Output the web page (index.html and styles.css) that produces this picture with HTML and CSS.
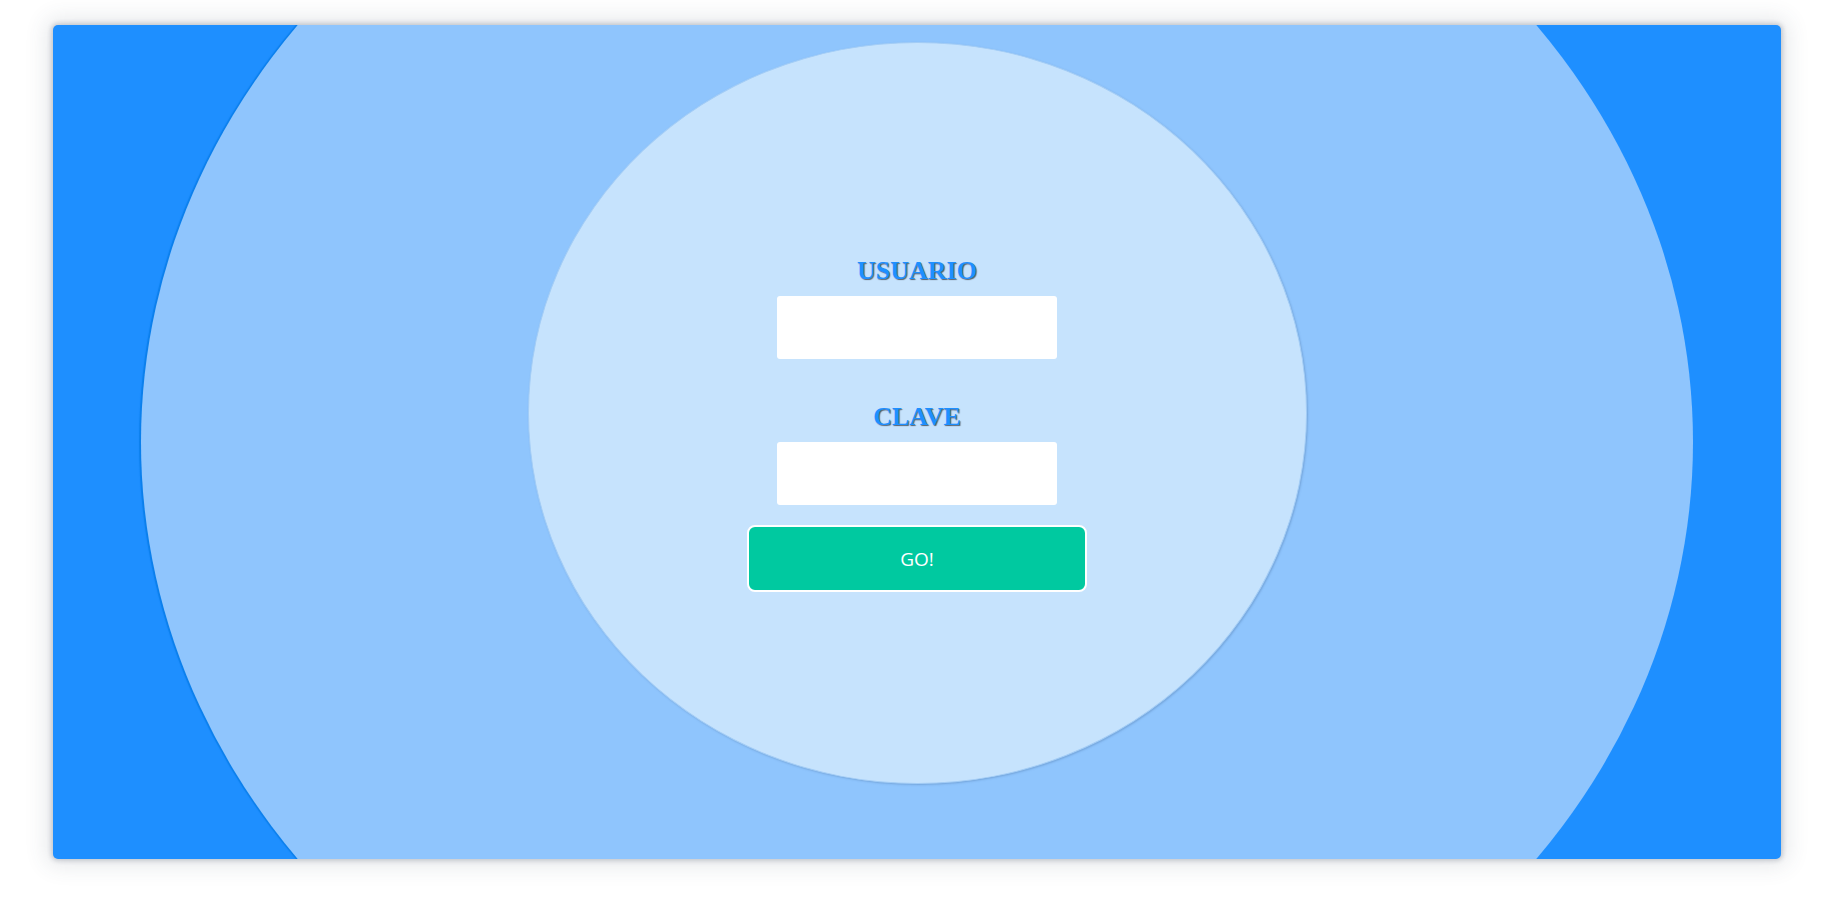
FILE: index.html
```html
<!DOCTYPE html>
<html lang="es">
<head>
<meta charset="utf-8">
<title>Login</title>
<link rel="stylesheet" href="styles.css">
</head>
<body>
<div class="card">
  <div class="outer-ring">
    <div class="inner-ring">
      <form class="login-form">
        <label class="field-label" for="usuario">USUARIO</label>
        <input class="field-input" id="usuario" type="text">
        <label class="field-label second" for="clave">CLAVE</label>
        <input class="field-input" id="clave" type="password">
        <button class="go-btn" type="button">GO!</button>
      </form>
    </div>
  </div>
</div>
</body>
</html>
```

FILE: styles.css
```css
html, body {
  margin: 0;
  padding: 0;
  background: #ffffff;
}
body {
  width: 1833px;
  height: 913px;
  overflow: hidden;
}
.card {
  box-sizing: border-box;
  width: 1728px;
  height: 834px;
  margin: 25px 0 0 53px;
  background: #1e8fff;
  border-radius: 5px;
  overflow: hidden;
  display: flex;
  align-items: center;
  justify-content: center;
  box-shadow: 0 0 4px 2px rgba(60, 70, 90, 0.22), 0 0 22px 7px rgba(60, 70, 90, 0.12);
}
.outer-ring {
  flex-shrink: 0;
  width: 1552px;
  height: 1384px;
  border-radius: 50%;
  background: #8fc5fd;
  box-shadow: -2px 0 1px #0b7fec;
  display: flex;
  align-items: center;
  justify-content: center;
}
.inner-ring {
  flex-shrink: 0;
  box-sizing: border-box;
  width: 779px;
  height: 742px;
  margin-bottom: 58px;
  border-radius: 50%;
  background: #c6e3fd;
  border: 1px solid #a3cdf6;
  box-shadow: 1px 1px 2px rgba(70, 110, 160, 0.35);
  display: flex;
  justify-content: center;
  padding-top: 213px;
}
.login-form {
  display: flex;
  flex-direction: column;
  align-items: center;
  margin: 0;
}
.field-label {
  font-family: "Liberation Serif", "Times New Roman", serif;
  font-weight: bold;
  font-size: 26px;
  line-height: 30px;
  color: #1e8fff;
  text-shadow: 1px 1px 1px #55606c;
  margin-bottom: 10px;
}
.field-label.second {
  margin-top: 43px;
}
.field-input {
  box-sizing: border-box;
  width: 280px;
  height: 63px;
  border: none;
  border-radius: 3px;
  background: #ffffff;
  margin: 0;
  padding: 0 10px;
  outline: none;
}
.go-btn {
  box-sizing: border-box;
  width: 340px;
  height: 67px;
  margin-top: 20px;
  background: #00c9a0;
  border: 2px solid #ffffff;
  border-radius: 8px;
  color: #ffffff;
  font-family: "Open Sans", "DejaVu Sans", sans-serif;
  font-size: 19px;
  cursor: pointer;
}
```
